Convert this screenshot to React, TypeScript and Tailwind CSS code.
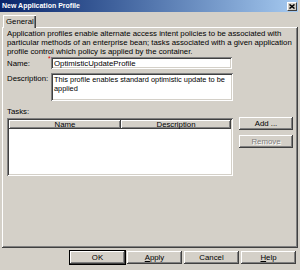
const raised =
  "shadow-[inset_-1px_-1px_0_#404040,inset_1px_1px_0_#ffffff,inset_-2px_-2px_0_#808080]";
const sunken =
  "shadow-[inset_1px_1px_0_#808080,inset_-1px_-1px_0_#ffffff,inset_2px_2px_0_#404040,inset_-2px_-2px_0_#d4d0c8]";

function Btn({ children, className = "" }: { children: React.ReactNode; className?: string }) {
  return (
    <div
      className={
        "h-[13px] bg-[#d4d0c8] flex items-center justify-center leading-[9px] shadow-[inset_-1px_-1px_0_#404040,inset_1px_1px_0_#ffffff,inset_-2px_-2px_0_#808080] " +
        className
      }
    >
      {children}
    </div>
  );
}

export default function App() {
  return (
    <div className="w-[300px] h-[270px] bg-[#d4d0c8] overflow-hidden font-['Liberation_Sans',Arial,sans-serif] text-[7.8px] leading-[9px] text-black flex flex-col">
      {/* Title bar */}
      <div className="h-[12px] w-[298px] bg-linear-to-r from-[#0a246a] to-[#a6caf0] flex items-center pl-[2px] pr-[1px] shrink-0">
        <span className="text-white font-bold text-[7px] leading-[12px] whitespace-nowrap">New Application Profile</span>
        <div className="ml-auto w-[10px] h-[9px] shrink-0 bg-[#d4d0c8] border-t border-l border-white border-r border-b border-r-[#404040] border-b-[#404040] flex items-center justify-center">
          <svg width="6" height="5" viewBox="0 0 6 5" className="block">
            <path d="M0.5 0.5L5.5 4.5M5.5 0.5L0.5 4.5" stroke="#000000" strokeWidth="1.5" />
          </svg>
        </div>
      </div>

      {/* Tabs */}
      <div className="mt-[3px] pl-[3px] h-[12px] flex relative z-10 shrink-0">
        <div className="w-[33px] h-[13px] bg-[#d4d0c8] shadow-[inset_1px_1px_0_#ffffff,inset_-1px_0_0_#404040,inset_-2px_0_0_#808080] pl-[3px] pt-[1px] leading-[11px] whitespace-nowrap">
          General
        </div>
      </div>

      {/* Panel */}
      <div className={"ml-[2px] w-[296px] h-[221px] shrink-0 flex flex-col pl-[5px] pt-[2px] " + raised}>
        <p className="whitespace-nowrap">
          Application profiles enable alternate access intent policies to be associated with
          <br />
          particular methods of an enterprise bean; tasks associated with a given application
          <br />
          profile control which policy is applied by the container.
        </p>

        {/* Name */}
        <div className="mt-[1px] flex items-center h-[12px]">
          <div className="w-[44px]">Name:</div>
          <div className="relative">
            <span className="absolute left-[-3px] top-[-2px] text-[#e00000] text-[7px] leading-[7px]">*</span>
            <div className={"w-[181px] h-[12px] bg-white pl-[3px] pt-[2px] leading-[9px] whitespace-nowrap " + sunken}>
              OptimisticUpdateProfile
            </div>
          </div>
        </div>

        {/* Description */}
        <div className="mt-[4px] flex">
          <div className="w-[44px] pt-[1px]">Description:</div>
          <div className={"w-[182px] h-[28px] bg-white pl-[3px] pt-[2px] text-[7.4px] leading-[9px] whitespace-nowrap " + sunken}>
            This profile enables standard optimistic update to be
            <br />
            applied
          </div>
        </div>

        {/* Tasks */}
        <div className="mt-[6px] h-[9px]">Tasks:</div>

        <div className="mt-[2px] flex">
          <div className={"w-[226px] h-[58px] bg-white p-[2px] flex flex-col " + sunken}>
            <div className="flex h-[9px]">
              <div className={"w-[112px] h-[9px] bg-[#d4d0c8] flex items-center justify-center leading-[9px] " + raised}>
                Name
              </div>
              <div className={"flex-1 h-[9px] bg-[#d4d0c8] flex items-center justify-center leading-[9px] " + raised}>
                Description
              </div>
            </div>
          </div>
          <div className="ml-[6px] flex flex-col">
            <div className="mt-[-1px]">
              <Btn className="w-[54px]">Add ...</Btn>
            </div>
            <div className="mt-[5px]">
              <Btn className="w-[54px] text-[#808080] [text-shadow:1px_1px_0_#ffffff]">Remove</Btn>
            </div>
          </div>
        </div>
      </div>

      {/* Footer */}
      <div className="mt-[3px] flex justify-end gap-[2px] pr-[4px]">
        <div className="outline outline-1 outline-black">
          <Btn className="w-[55px]">OK</Btn>
        </div>
        <Btn className="w-[55px]">
          <span><span className="underline">A</span>pply</span>
        </Btn>
        <Btn className="w-[55px]">Cancel</Btn>
        <Btn className="w-[55px]">
          <span><span className="underline">H</span>elp</span>
        </Btn>
      </div>
    </div>
  );
}
